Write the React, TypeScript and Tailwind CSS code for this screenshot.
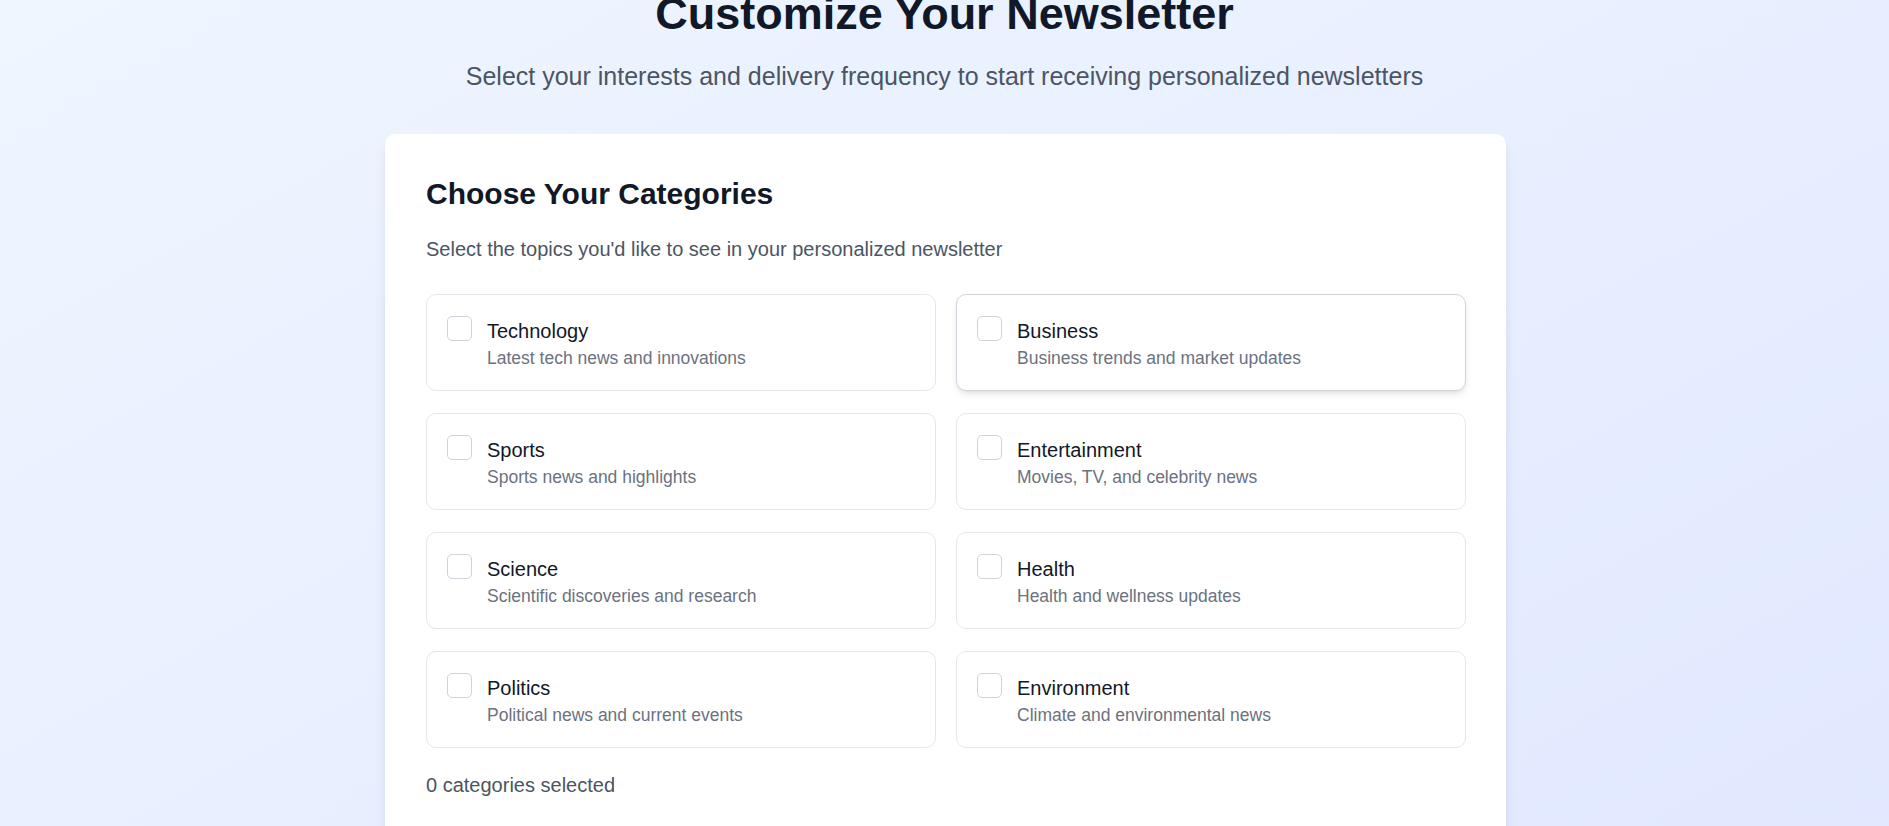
import React from "react";

type Category = { name: string; description: string };

const categories: Category[] = [
  { name: "Technology", description: "Latest tech news and innovations" },
  { name: "Business", description: "Business trends and market updates" },
  { name: "Sports", description: "Sports news and highlights" },
  { name: "Entertainment", description: "Movies, TV, and celebrity news" },
  { name: "Science", description: "Scientific discoveries and research" },
  { name: "Health", description: "Health and wellness updates" },
  { name: "Politics", description: "Political news and current events" },
  { name: "Environment", description: "Climate and environmental news" },
];

function CategoryCard({ category, hovered }: { category: Category; hovered?: boolean }) {
  return (
    <label
      className={
        hovered
          ? "flex cursor-pointer items-start gap-[15px] rounded-[10px] border border-[#d1d5db] bg-white px-[20px] pt-[20px] pb-[20px] shadow-[0_4px_8px_-2px_rgba(0,0,0,0.12),0_2px_4px_-2px_rgba(0,0,0,0.08)]"
          : "flex cursor-pointer items-start gap-[15px] rounded-[10px] border border-[#e5e7eb] bg-white px-[20px] pt-[20px] pb-[20px]"
      }
    >
      <span className="mt-px h-[25px] w-[25px] shrink-0 rounded-[5px] border-[1.5px] border-[#cfd4db] bg-white" />
      <div className="translate-y-px">
        <p className="text-[20px] leading-[30px] text-[#111827]">{category.name}</p>
        <p className="text-[17.5px] leading-[25px] text-[#6b7280]">{category.description}</p>
      </div>
    </label>
  );
}

export default function App() {
  return (
    <div
      className="min-h-[826px] overflow-hidden bg-gradient-to-br from-[#eff6ff] to-[#e0e7ff]"
      style={{ fontFamily: '"Liberation Sans", Arial, sans-serif' }}
    >
      <div className="-mt-[11px] text-center">
        <h1 className="mb-[20px] text-[45px] font-bold leading-[50px] text-[#111827]">Customize Your Newsletter</h1>
        <p className="text-[25px] leading-[35px] text-[#4b5563]">
          Select your interests and delivery frequency to start receiving personalized newsletters
        </p>
      </div>

      <div className="mx-auto mt-[40px] w-full max-w-[1121px] translate-x-px rounded-[10px] bg-white py-[40px] pl-[41px] pr-[40px] shadow-[0_10px_15px_-3px_rgba(0,0,0,0.1),0_4px_6px_-4px_rgba(0,0,0,0.1)]">
        <h2 className="mb-[20px] text-[30px] font-bold leading-[40px] text-[#111827]">Choose Your Categories</h2>
        <p className="mb-[30px] text-[20px] leading-[30px] text-[#4b5563]">
          Select the topics you'd like to see in your personalized newsletter
        </p>
        <div className="grid grid-cols-2 gap-x-[20px] gap-y-[22px]">
          {categories.map((c) => (
            <CategoryCard key={c.name} category={c} hovered={c.name === "Business"} />
          ))}
        </div>
        <p className="mt-[22px] text-[20px] leading-[30px] text-[#4b5563]">0 categories selected</p>
        <div className="h-[200px]" />
      </div>
    </div>
  );
}
